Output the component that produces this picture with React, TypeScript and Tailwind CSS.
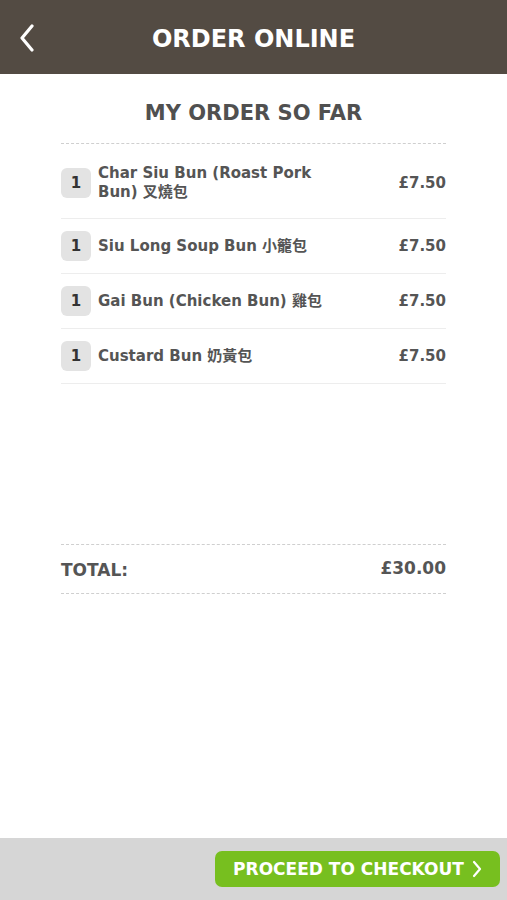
import React from 'react';

const items = [
  { qty: 1, name: 'Char Siu Bun (Roast Pork Bun) 叉燒包', price: '£7.50' },
  { qty: 1, name: 'Siu Long Soup Bun 小籠包', price: '£7.50' },
  { qty: 1, name: 'Gai Bun (Chicken Bun) 雞包', price: '£7.50' },
  { qty: 1, name: 'Custard Bun 奶黃包', price: '£7.50' },
];

const font = { fontFamily: '"DejaVu Sans", "Noto Sans CJK TC", sans-serif' };

export default function App() {
  return (
    <div className="flex h-[900px] flex-col bg-white" style={font}>
      {/* Header */}
      <header className="relative flex h-[74px] shrink-0 items-center justify-center bg-[#534b43]">
        <button className="absolute left-[18px] top-[24px] flex h-[28px] w-[18px] items-center justify-center">
          <svg width="16" height="28" viewBox="0 0 16 28" fill="none">
            <path d="M13 2L3 14L13 26" stroke="white" strokeWidth="3.2" strokeLinecap="round" strokeLinejoin="round" />
          </svg>
        </button>
        <h1 className="mt-[3px] text-[24px] font-bold leading-[28px] text-white">ORDER ONLINE</h1>
      </header>

      {/* Content */}
      <main className="flex flex-1 flex-col px-[61px]">
        <h2 className="mt-[27px] text-center text-[21px] font-bold leading-[25px] text-[#505050]">MY ORDER SO FAR</h2>
        <div className="mt-[17px] border-t border-dashed border-[#cfcfcf]" />

        <ul className="mt-[8px]">
          {items.map((item) => (
            <li key={item.name} className="flex items-center border-b border-[#ededed] py-[12px] first:pb-[16px]">
              <span className="flex h-[30px] w-[30px] shrink-0 items-center justify-center rounded-[6px] bg-[#e3e3e3] text-[15px] font-bold leading-none text-[#333]">
                {item.qty}
              </span>
              <span className="ml-[7px] w-[230px] text-[15px] font-bold leading-[19px] text-[#555]">{item.name}</span>
              <span className="ml-auto text-[15px] font-bold leading-[19px] text-[#555]">{item.price}</span>
            </li>
          ))}
        </ul>

        <div className="mt-[160px] flex h-[50px] items-center justify-between border-y border-dashed border-[#cfcfcf] pt-[2px]">
          <span className="text-[17px] font-bold leading-[20px] text-[#555]">TOTAL:</span>
          <span className="-mt-[4px] text-[17px] font-bold leading-[22px] text-[#555]">£30.00</span>
        </div>
      </main>

      {/* Footer */}
      <footer className="flex h-[62px] shrink-0 items-center justify-end bg-[#d6d6d6] pr-[7px]">
        <button className="flex h-[36px] w-[285px] items-center justify-center gap-[8px] rounded-[7px] bg-[#77bf1f] text-[17px] font-bold leading-[20px] text-white">
          PROCEED TO CHECKOUT
          <svg width="10" height="18" viewBox="0 0 10 18" fill="none">
            <path d="M2 2L8 9L2 16" stroke="white" strokeWidth="2.2" strokeLinecap="round" strokeLinejoin="round" />
          </svg>
        </button>
      </footer>
    </div>
  );
}
